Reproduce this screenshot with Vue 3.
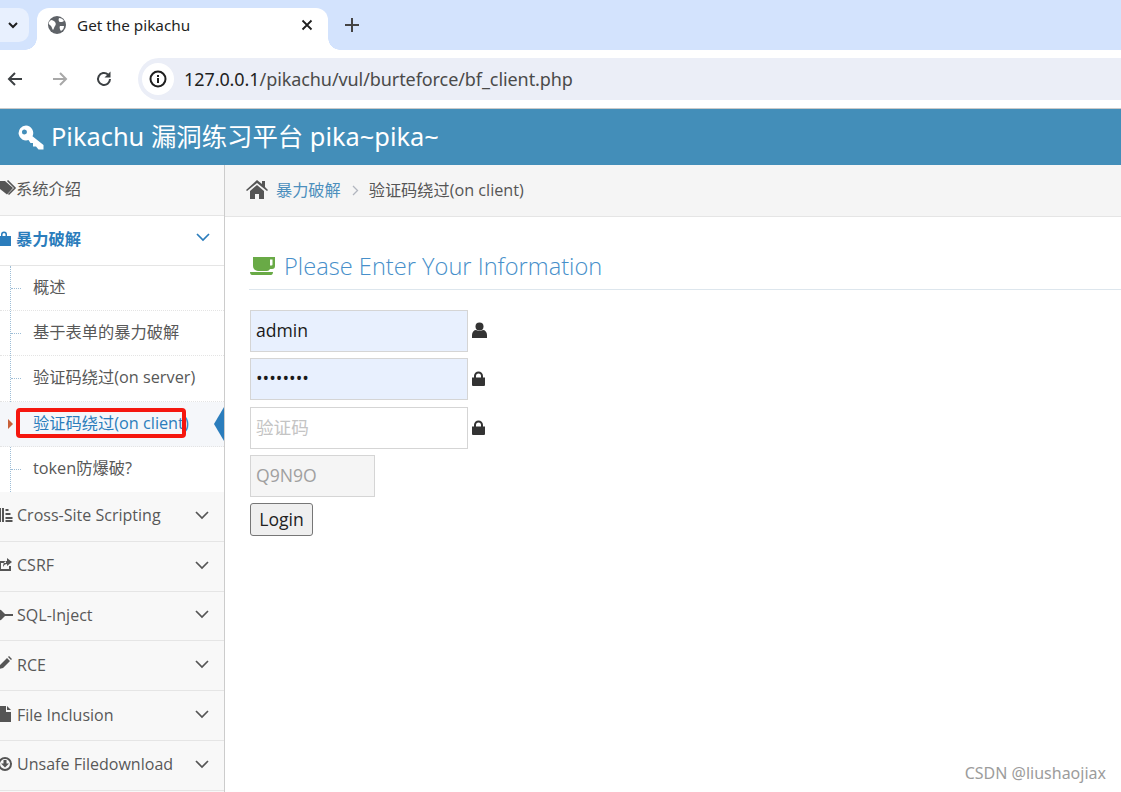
<script setup>
const subItems = [
  { label: '概述' },
  { label: '基于表单的暴力破解' },
  { label: '验证码绕过(on server)' },
  { label: '验证码绕过(on client)', active: true },
  { label: 'token防爆破?' },
]
const lowerItems = [
  { label: 'Cross-Site Scripting', icon: 'M-2 1h3v14h-3zM2 1h2v14H2zM5.500 2h3v2h-3zM5.500 6h5v2h-5zM5.500 10h7v2h-7zM5.500 13h7v2h-7z' },
  { label: 'CSRF', icon: 'M-1 4h7v2H1v6h8V9h2v5H-1zM7 1l5 4-5 4V7C5 7 4 8 3 10c0-4 2-6 4-6z' },
  { label: 'SQL-Inject', icon: 'M-2 2l3 1 4 4h8v2H5l-4 4-3 1 1-6z' },
  { label: 'RCE', icon: 'M-1 13l1-4 7-7 3 3-7 7zM8 1l1-1 3 3-1 1z' },
  { label: 'File Inclusion', icon: 'M-1 0h7v6h5v10H-1zM7 0l4 4H7z' },
  { label: 'Unsafe Filedownload', icon: 'M5 1a7 7 0 1 0 0 14A7 7 0 0 0 5 1zm0 2a5 5 0 1 1 0 10A5 5 0 0 1 5 3zM3.500 4h3v3.500H9L5 11.500 1 7.500h2.500z' },
]
</script>

<template>
  <div class="page">
    <header class="tabstrip">
      <div class="tab-list-btn">
        <svg width="12" height="12" viewBox="0 0 12 12"><path d="M2 4l4 4 4-4" fill="none" stroke="#1f1f1f" stroke-width="2"/></svg>
      </div>
      <div class="tab">
        <svg class="globe" width="18" height="18" viewBox="0 0 18 18">
          <circle cx="9" cy="9" r="9" fill="#5f6368"/>
          <path d="M3 4c2 0 3 1 4 2s1 3 0 4-1 3-2 4c-1-1-1-3-2-4S0 8 1 6zM11 2c2 0 4 1 5 3-1 1-3 1-4 1s-2-2-1-4zM12 10h4c0 2-1 4-3 5-1-1-2-4-1-5z" fill="#fff"/>
        </svg>
        <span class="tab-title">Get the pikachu</span>
        <svg class="tab-close" width="12" height="12" viewBox="0 0 12 12"><path d="M1.500 1.500l9 9m0-9l-9 9" stroke="#1f1f1f" stroke-width="1.800"/></svg>
      </div>
      <svg class="new-tab" width="14" height="14" viewBox="0 0 14 14"><path d="M7 0v14M0 7h14" stroke="#444" stroke-width="2"/></svg>
    </header>

    <div class="toolbar">
      <svg class="nav-icon back" width="18" height="18" viewBox="0 0 18 18"><path d="M16 9H3m6-6L3 9l6 6" fill="none" stroke="#3c4043" stroke-width="2"/></svg>
      <svg class="nav-icon forward" width="18" height="18" viewBox="0 0 18 18"><path d="M2 9h13M9 3l6 6-6 6" fill="none" stroke="#a8a8a8" stroke-width="2"/></svg>
      <svg class="nav-icon reload" width="18" height="18" viewBox="0 0 18 18"><path d="M15 9a6 6 0 1 1-2-4.500" fill="none" stroke="#3c4043" stroke-width="2"/><path d="M15.500 1.500v6h-6z" fill="#3c4043"/></svg>
      <div class="omnibox">
        <span class="info-chip">
          <svg width="18" height="18" viewBox="0 0 18 18"><circle cx="9" cy="9" r="7.500" fill="none" stroke="#1f1f1f" stroke-width="2"/><path d="M8 8h2v5H8zM8 5h2v2H8z" fill="#1f1f1f"/></svg>
        </span>
        <span class="url"><span class="url-host">127.0.0.1</span>/pikachu/vul/burteforce/bf_client.php</span>
      </div>
    </div>

    <div class="navbar">
      <svg class="key" width="26" height="25" viewBox="0 0 26 25">
        <path d="M8 0.500a7.500 7.500 0 0 1 6.500 10.800L25.500 20v4.500h-5L18 21.500h-3V18h-2.500l-2-2.900A7.500 7.500 0 1 1 8 0.500zM6.500 4.500a2.500 2.500 0 1 0 0 5 2.500 2.500 0 0 0 0-5z" fill="#fff" fill-rule="evenodd"/>
      </svg>
      <span>Pikachu 漏洞练习平台 pika~pika~</span>
    </div>

    <div class="body">
      <aside class="sidebar">
        <div class="row first">
          <svg class="row-icon" width="16" height="16" viewBox="0 0 16 16"><path d="M-3 1h8l8 7-6 6.500-10-8z" fill="#555"/><path d="M7.500 0.500l7.500 7.500-6.500 6.500" fill="none" stroke="#555" stroke-width="1.600"/></svg>
          <span>系统介绍</span>
        </div>

        <div class="open-group">
          <div class="row open-head">
            <svg class="row-icon" width="16" height="16" viewBox="0 0 16 16"><path d="M-4 5h15v10H-4zM1 5V3.500a3 3 0 0 1 6 0V5H5.500V3.500a1.500 1.500 0 0 0-3 0V5z" fill="#2b7dbc"/></svg>
            <span>暴力破解</span>
            <svg class="chev" width="14" height="9" viewBox="0 0 14 9"><path d="M1 1l6 6 6-6" fill="none" stroke="#2b7dbc" stroke-width="1.700"/></svg>
          </div>
          <ul class="submenu">
            <li v-for="item in subItems" :key="item.label" class="sub-item" :class="{ active: item.active }">
              <span class="tick"></span>
              <span v-if="item.active" class="marker"></span>
              <span v-if="item.active" class="notch"></span>
              <span>{{ item.label }}</span>
            </li>
          </ul>
        </div>

        <div v-for="item in lowerItems" :key="item.label" class="row lower">
          <svg class="row-icon" width="16" height="16" viewBox="0 0 16 16"><path :d="item.icon" fill="#555" fill-rule="evenodd"/></svg>
          <span>{{ item.label }}</span>
          <svg class="chev" width="14" height="9" viewBox="0 0 14 9"><path d="M1 1l6 6 6-6" fill="none" stroke="#555" stroke-width="1.700"/></svg>
        </div>
      </aside>

      <main class="main">
        <div class="crumbs">
          <svg class="home" width="22" height="19" viewBox="0 0 22 19"><path d="M11 0l5 4V1h3v6l3 3-1 1-10-8-10 8-1-1z" fill="#555"/><path d="M11 5l7 6v8h-5v-5H9v5H4v-8z" fill="#555"/></svg>
          <span class="crumb-link">暴力破解</span>
          <svg class="crumb-sep" width="7" height="11" viewBox="0 0 7 11"><path d="M1 1l4.500 4.500L1 10" fill="none" stroke="#b2b6bf" stroke-width="1.300"/></svg>
          <span class="crumb-current">验证码绕过(on client)</span>
        </div>

        <section class="content">
          <h1 class="heading">
            <svg width="25" height="20" viewBox="0 0 25 20"><path d="M3 1h22v9a3 3 0 0 1-3 3h-2a4 4 0 0 1-3 2H8a5 5 0 0 1-5-5z" fill="#69aa46"/><path d="M20 3.500h2.500v5a1 1 0 0 1-1 1H20z" fill="#fff"/><path d="M0 16h23c0 2-1 3-2 3H2c-1 0-2-1-2-3z" fill="#69aa46"/></svg>
            <span>Please Enter Your Information</span>
          </h1>

          <form class="form" @submit.prevent>
            <div class="field">
              <input class="input filled" type="text" value="admin" />
              <svg class="field-icon" width="15" height="16" viewBox="0 0 15 16"><circle cx="7.500" cy="4.500" r="4" fill="#333"/><path d="M0 16v-3c0-3 2-5 4-5 1 1 6 1 7 0 2 0 4 2 4 5v3z" fill="#333"/></svg>
            </div>
            <div class="field">
              <input class="input filled" type="password" value="12345678" />
              <svg class="field-icon lock" width="13" height="15" viewBox="0 0 13 15"><path d="M0 6.500h13V14a1 1 0 0 1-1 1H1a1 1 0 0 1-1-1zM2 6.500V5a4.500 4.500 0 0 1 9 0v1.500H9V5a2.500 2.500 0 0 0-5 0v1.500z" fill="#333"/></svg>
            </div>
            <div class="field">
              <input class="input" type="text" placeholder="验证码" />
              <svg class="field-icon lock" width="13" height="15" viewBox="0 0 13 15"><path d="M0 6.500h13V14a1 1 0 0 1-1 1H1a1 1 0 0 1-1-1zM2 6.500V5a4.500 4.500 0 0 1 9 0v1.500H9V5a2.500 2.500 0 0 0-5 0v1.500z" fill="#333"/></svg>
            </div>
            <input class="input captcha" type="text" value="Q9N9O" readonly />
            <button class="login" type="submit">Login</button>
          </form>
        </section>
      </main>
    </div>

    <div class="red-box"></div>
    <div class="watermark">CSDN @liushaojiax</div>
  </div>
</template>

<style scoped>
.page {
  position: relative;
  width: 1121px;
  height: 792px;
  overflow: hidden;
  background: #fff;
  font-family: "Open Sans", "Noto Sans CJK SC", sans-serif;
  color: #585858;
}

.tabstrip {
  display: flex;
  align-items: flex-start;
  height: 50px;
  padding-top: 8px;
  box-sizing: border-box;
  background: #d3e3fd;
}
.tab-list-btn {
  display: flex;
  align-items: center;
  justify-content: flex-end;
  width: 29px;
  height: 34px;
  padding-right: 10px;
  box-sizing: border-box;
  margin-right: 8px;
  background: #e8f0fe;
  border-radius: 0 10px 10px 0;
}
.tab {
  position: relative;
  display: flex;
  align-items: center;
  width: 291px;
  height: 42px;
  padding: 0 15px 8px 11px;
  box-sizing: border-box;
  background: #fff;
  border-radius: 12px 12px 0 0;
}
.tab::before,
.tab::after {
  content: "";
  position: absolute;
  bottom: 0;
  width: 12px;
  height: 12px;
}
.tab::before {
  left: -12px;
  background: radial-gradient(circle at 0 0, transparent 11.500px, #fff 12px);
}
.tab::after {
  right: -12px;
  background: radial-gradient(circle at 100% 0, transparent 11.500px, #fff 12px);
}
.tab-title {
  flex: 1;
  margin-left: 11px;
  font-size: 15.300px;
  color: #1f1f1f;
  font-family: "Noto Sans", "Open Sans", sans-serif;
}
.new-tab {
  margin: 10px 0 0 17px;
}

.toolbar {
  display: flex;
  align-items: center;
  height: 59px;
  box-sizing: border-box;
  padding-bottom: 1px;
  border-bottom: 1px solid #c9c9c9;
  background: #fff;
}
.nav-icon {
  flex: none;
}
.back { margin-left: 6px; }
.forward { margin-left: 27px; }
.reload { margin-left: 26px; }
.omnibox {
  display: flex;
  align-items: center;
  flex: 1;
  height: 42px;
  margin-left: 25px;
  padding-left: 4px;
  background: #ebeef7;
  border-radius: 21px 0 0 21px;
}
.info-chip {
  display: flex;
  align-items: center;
  justify-content: center;
  width: 32px;
  height: 32px;
  border-radius: 50%;
  background: #fff;
}
.url {
  margin-left: 10px;
  font-size: 18px;
  color: #4a4a4a;
  font-family: "Noto Sans", "Open Sans", sans-serif;
  letter-spacing: -0.080px;
}
.url-host { color: #1f1f1f; }

.navbar {
  display: flex;
  align-items: center;
  height: 56px;
  padding: 0 0 4px 18px;
  box-sizing: border-box;
  background: #438eb9;
  color: #fff;
  font-size: 25.400px;
  font-family: "Noto Sans", "Noto Sans CJK SC", sans-serif;
}
.key { margin: 4px 7px 0 0; }

.body {
  display: flex;
  height: 627px;
}

.sidebar {
  flex: none;
  width: 225px;
  box-sizing: border-box;
  background: #f8f8f8;
  border-right: 1px solid #ccc;
  font-size: 16.250px;
  overflow: hidden;
}
.row {
  display: flex;
  align-items: center;
  height: 50px;
  box-sizing: border-box;
  padding: 0 15px 4px 16px;
  border-bottom: 1px solid #e5e5e5;
  position: relative;
  background: #f8f8f8;
}
.row span { flex: 1; }
.row-icon {
  position: absolute;
  left: 0;
  top: 15px;
  overflow: visible;
}
.first { height: 51px; }
.lower {
  height: 49.800px;
  padding-left: 17px;
  padding-bottom: 2px;
  font-size: 16.050px;
}
.open-group {
  width: 226px;
  box-sizing: border-box;
  border-right: 2px solid #2b7dbc;
  background: #fff;
}
.open-head {
  background: #fff;
  color: #2b7dbc;
  font-weight: 700;
  padding-right: 14px;
  padding-bottom: 6px;
}
.submenu {
  list-style: none;
  margin: 0;
  padding: 0;
  position: relative;
}
.submenu::before {
  content: "";
  position: absolute;
  left: 10px;
  top: 0;
  bottom: 0;
  border-left: 1px dotted #9dbdd6;
}
.sub-item {
  position: relative;
  display: flex;
  align-items: center;
  height: 45.200px;
  box-sizing: border-box;
  padding: 0 0 4px 33px;
  border-bottom: 1px dotted #e4e4e4;
}
.sub-item:last-child { border-bottom: none; }
.tick {
  position: absolute;
  left: 11px;
  top: 22px;
  width: 10px;
  border-top: 1px dotted #9dbdd6;
}
.sub-item.active {
  background: #f5f7fa;
  color: #2b7dbc;
}
.sub-item.active .tick { display: none; }
.marker {
  position: absolute;
  left: 8px;
  top: 17px;
  border-left: 5px solid #c86139;
  border-top: 5px solid transparent;
  border-bottom: 5px solid transparent;
}
.notch {
  position: absolute;
  right: 0;
  top: 5px;
  border-right: 10px solid #2b7dbc;
  border-top: 17px solid transparent;
  border-bottom: 17px solid transparent;
}

.main { flex: 1; min-width: 0; }
.crumbs {
  display: flex;
  align-items: center;
  height: 52px;
  box-sizing: border-box;
  padding: 0 0 3px 21px;
  background: #f5f5f5;
  border-bottom: 1px solid #e5e5e5;
  font-size: 16.200px;
}
.crumb-link { margin-left: 8px; color: #4c8fbd; }
.crumb-sep { margin: 3px 10px 0 11px; }
.crumb-current { color: #555; }

.content { padding: 0 0 0 24px; }
.heading {
  display: flex;
  align-items: center;
  height: 73px;
  margin: 0;
  padding: 28px 0 2px;
  box-sizing: border-box;
  border-bottom: 1px solid #dde6ed;
  font-size: 23.650px;
  font-weight: 300;
  color: #478fca;
}
.heading svg { margin: 0 9px 0 1px; }

.form {
  display: flex;
  flex-direction: column;
  align-items: flex-start;
  padding: 20px 0 0 1px;
}
.field {
  display: flex;
  align-items: center;
  margin-bottom: 6px;
}
.field:nth-child(2) { margin-bottom: 7px; }
.field-icon { margin: -2px 0 0 4px; }
.input {
  width: 218px;
  height: 42px;
  box-sizing: border-box;
  padding: 0 5px 2px;
  border: 1px solid #d5d5d5;
  outline: none;
  background: #fff;
  font: 17.600px "Open Sans", "Noto Sans CJK SC", sans-serif;
  color: #1a1a1a;
}
.input::placeholder { color: #c4c4c4; }
.filled { background: #e8f0fe; }
.captcha {
  width: 125px;
  margin-bottom: 6px;
  background: #f5f5f5;
  color: #a0a0a0;
}
.login {
  width: 63px;
  height: 33px;
  padding: 0 0 2px;
  box-sizing: border-box;
  border: 1px solid #767676;
  border-radius: 3px;
  background: #efefef;
  color: #222;
  font: 17.600px "Open Sans", sans-serif;
}

.red-box {
  position: absolute;
  left: 16px;
  top: 408px;
  width: 170px;
  height: 30px;
  box-sizing: border-box;
  border: 4px solid #f5170f;
  border-radius: 4px;
}
.watermark {
  position: absolute;
  right: 15px;
  top: 762px;
  font-size: 16px;
  color: #9c9c9c;
  font-family: "Noto Sans", sans-serif;
}
</style>
